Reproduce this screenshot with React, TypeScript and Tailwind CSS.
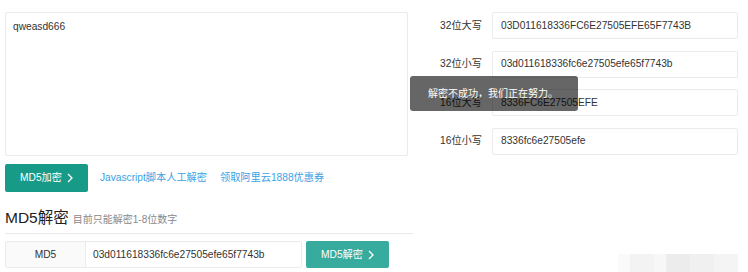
import React from 'react';

const hashes = [
  { label: '32位大写', value: '03D011618336FC6E27505EFE65F7743B' },
  { label: '32位小写', value: '03d011618336fc6e27505efe65f7743b' },
  { label: '16位大写', value: '8336FC6E27505EFE' },
  { label: '16位小写', value: '8336fc6e27505efe' },
];

const font = { fontFamily: '"Liberation Sans", Arial, "Noto Sans CJK SC", sans-serif' };

const Chevron: React.FC = () => (
  <svg width="6" height="10" viewBox="0 0 6 10" className="ml-[5px]">
    <path d="M1 1l4 4-4 4" fill="none" stroke="white" strokeWidth="1.3" />
  </svg>
);

const App: React.FC = () => {
  return (
    <div className="relative w-[748px] h-[272px] bg-white overflow-hidden text-[#333]" style={font}>
      <div className="px-[5px] pt-[12px]">
        {/* top: input + results */}
        <div className="flex">
          <div className="w-[403px] h-[144px] border border-[#ebebeb] rounded-[2px] px-[7px] pt-[6px] text-[10.2px] text-[#333]">
            qweasd666
          </div>
          <div className="flex flex-col gap-[11.5px] ml-[2px]">
            {hashes.map((h) => (
              <div key={h.label} className="flex items-center">
                <div className="w-[72px] text-right text-[10.2px] text-[#333]">{h.label}</div>
                <div className="ml-[10px] w-[246px] h-[27px] border border-[#ebebeb] rounded-[2px] flex items-center px-[8px] text-[10.2px]">
                  {h.value}
                </div>
              </div>
            ))}
          </div>
        </div>

        {/* actions */}
        <div className="flex items-center mt-[8px]">
          <button className="w-[83px] h-[28px] bg-[#179a87] rounded-[2px] text-white text-[10.2px] flex items-center justify-center">
            MD5加密<Chevron />
          </button>
          <a className="ml-[12px] text-[10.2px] text-[#3aa2e4]">Javascript脚本人工解密</a>
          <a className="ml-[13px] text-[10.2px] text-[#3aa2e4]">领取阿里云1888优惠券</a>
        </div>

        {/* decrypt */}
        <div className="w-[408px] mt-[17px] pb-[6px] border-b border-[#ebebeb] flex items-end">
          <span className="text-[15.5px] leading-[18px] text-[#222]">MD5解密</span>
          <span className="ml-[4px] text-[10px] leading-[14px] text-[#888]">目前只能解密1-8位数字</span>
        </div>

        <div className="flex items-center mt-[7px]">
          <div className="flex h-[27px] border border-[#ebebeb] rounded-[2px]">
            <div className="w-[80px] bg-[#fafafa] border-r border-[#ebebeb] flex items-center justify-center text-[10.2px]">MD5</div>
            <div className="w-[215px] flex items-center px-[7px] text-[10.2px]">03d011618336fc6e27505efe65f7743b</div>
          </div>
          <button className="ml-[4px] w-[83px] h-[27px] bg-[#36ab9e] rounded-[2px] text-white text-[10.2px] flex items-center justify-center">
            MD5解密<Chevron />
          </button>
        </div>
      </div>

      {/* toast */}
      <div className="absolute left-[410px] top-[76px] w-[168px] h-[35px] rounded-[3px] bg-black/60 flex items-center pl-[18px] text-white text-[10px]">
        解密不成功，我们正在努力。
      </div>

      {/* blurred corner */}
      <div className="absolute right-[10px] bottom-0 flex h-[18px]">
        <div className="w-[12px] bg-[#fafafa]" />
        <div className="w-[24px] bg-[#f3f3f3]" />
        <div className="w-[12px] bg-[#f7f7f7]" />
        <div className="w-[24px] bg-[#ececec]" />
        <div className="w-[24px] bg-[#f0f0f0]" />
        <div className="w-[24px] bg-[#f4f4f4]" />
      </div>
    </div>
  );
};

export default App;
